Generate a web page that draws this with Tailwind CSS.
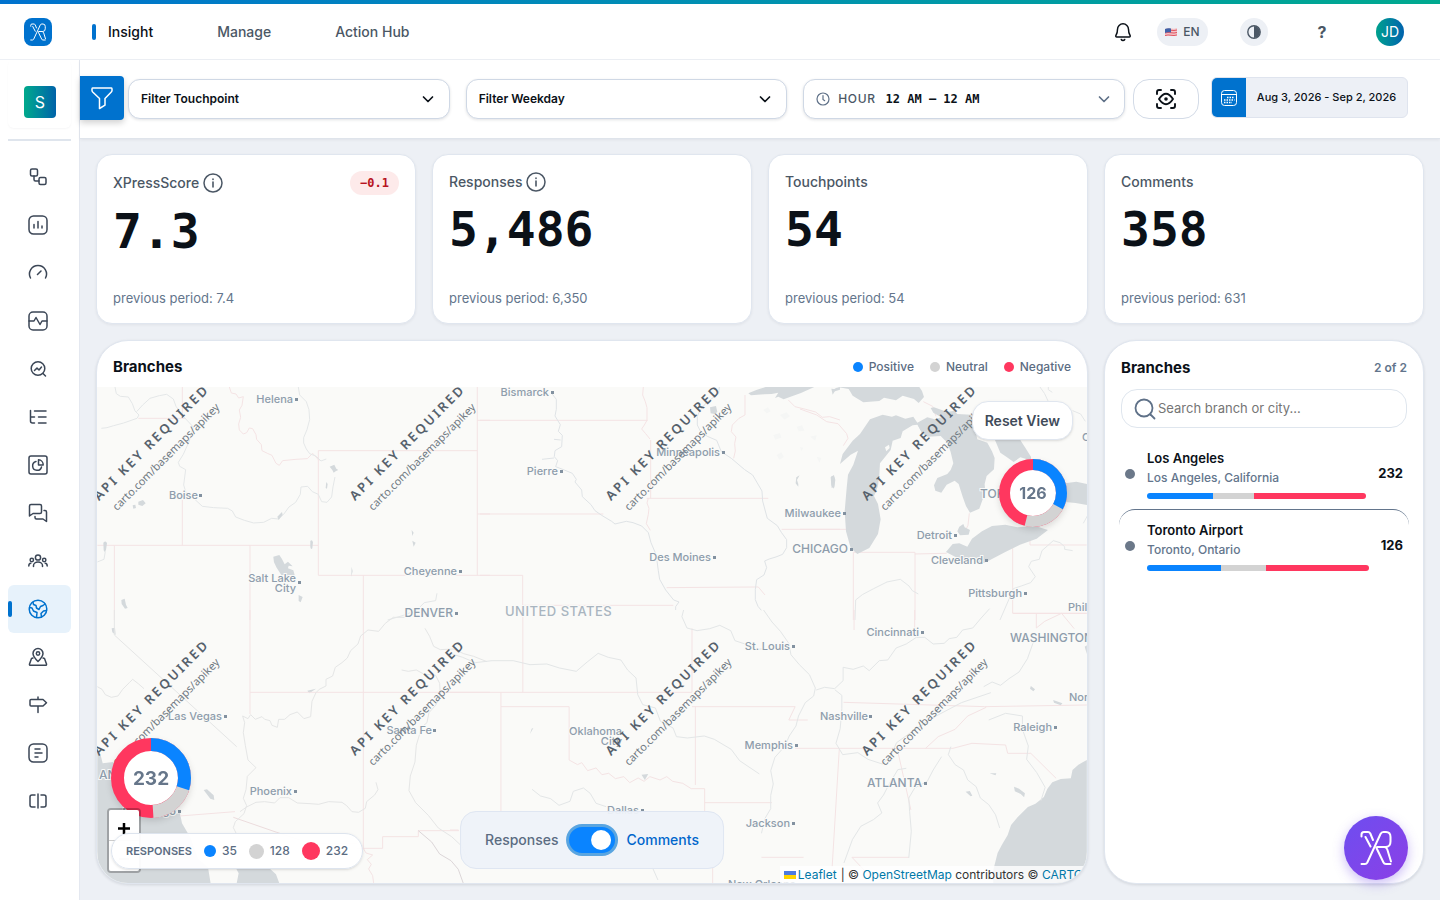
<!DOCTYPE html>
<html lang="en">
<head>
    <meta charset="UTF-8">
    <meta name="viewport" content="width=device-width, initial-scale=1.0">
    <title>Insight - Branches</title>
    <script src="https://cdn.jsdelivr.net/npm/@tailwindcss/browser@4"></script>
    <style>
        body { font-family: Inter, 'Liberation Sans', sans-serif; }
        .mono { font-family: 'DejaVu Sans Mono', 'Liberation Mono', monospace; }
        .map-line { fill: none; vector-effect: non-scaling-stroke; stroke-width: 1; stroke-linejoin: round; }
        .side-icon { width: 20px; height: 20px; fill: none; stroke: currentColor; stroke-width: 1.5; stroke-linecap: round; stroke-linejoin: round; }
    </style>
</head>
<body class="min-h-screen flex flex-col bg-[#edf0f5] text-[#0b1118]">
    <svg class="hidden" aria-hidden="true">
        <symbol id="logo" viewBox="0 0 32 36">
            <path d="M1.500 6.500V4.500Q1.500 2 4 2H8Q9.500 2 10.300 3.500L13 10M1.500 34H5Q6.500 34 7.300 32.500L20.500 4Q21.500 2 23.500 2H26Q30.500 2 30.500 7V11.500Q30.500 17 25.500 17H17.500Q16 17 16.700 18.500L23.500 32.500Q24.200 34 26 34H30.500M24.500 17Q26.500 17.300 27.300 19.500L31 31.500M5.500 7 10.500 16.500" fill="none" stroke="currentColor" stroke-width="2" stroke-linecap="round" stroke-linejoin="round"/>
        </symbol>
        <symbol id="info" viewBox="0 0 20 20">
            <circle cx="10" cy="10" r="9" fill="none" stroke="currentColor" stroke-width="1.5"/>
            <path d="M10 9v5M10 6v.5" fill="none" stroke="currentColor" stroke-width="1.600" stroke-linecap="round"/>
        </symbol>
        <symbol id="chevron" viewBox="0 0 12 12">
            <path d="M1.500 4 6 8.500 10.500 4" fill="none" stroke="currentColor" stroke-width="1.700" stroke-linecap="round" stroke-linejoin="round"/>
        </symbol>
    </svg>

    <!-- Top bar -->
    <div class="h-1 bg-linear-to-r from-[#0072ce] to-[#00a98f]"></div>
    <header class="h-14 flex items-center bg-white border-b border-[#edf0f5] pl-6 pr-9">
        <a href="#" aria-label="Home" class="size-7 rounded-lg bg-[#0072ce] text-white flex items-center justify-center">
            <svg class="w-4 h-[18px]"><use href="#logo"/></svg>
        </a>
        <nav class="flex items-center gap-16 ml-10 text-sm font-medium text-[#4b5765]">
            <a href="#" class="flex items-center gap-3 text-[#0b1118]"><span class="w-1 h-4 rounded-sm bg-[#0072ce]"></span>Insight</a>
            <a href="#">Manage</a>
            <a href="#">Action Hub</a>
        </nav>
        <div class="ml-auto flex items-center">
            <button aria-label="Notifications" class="mr-6">
                <svg class="size-5" viewBox="0 0 20 20" fill="none" stroke="currentColor" stroke-width="1.500" stroke-linejoin="round" stroke-linecap="round"><path d="M10 1.800a5.500 5.500 0 0 0-5.500 5.500c0 3-.6 4.700-1.500 6-.5.700-.2 1.700.8 1.700h12.400c1 0 1.300-1 .8-1.700-.9-1.300-1.500-3-1.500-6A5.500 5.500 0 0 0 10 1.800Z"/><path d="M8.300 17.500a2 2 0 0 0 3.400 0"/></svg>
            </button>
            <button class="h-7 w-[51px] rounded-full bg-[#edf0f5] flex items-center justify-center gap-1.5 text-xs font-medium text-[#4b5765] mr-8">
                <svg class="w-3 h-2" viewBox="0 0 12 8"><path d="M0 1c4-2 8 1 12-1v7c-4 2-8-1-12 1Z" fill="#f3c4c8"/><path d="M0 2.500c4-1.500 8 1 12-.5M0 5c4-1.500 8 1 12-.5M0 7.500c4-1.500 8 1 12-.5" stroke="#e0525f" fill="none"/><path d="M0 1c2-1 4-.8 6-.4v4C4 4.200 2 4 0 5Z" fill="#3f61a8"/></svg>
                EN
            </button>
            <button aria-label="Contrast" class="size-7 rounded-full bg-[#edf0f5] text-[#4b5765] flex items-center justify-center mr-10">
                <svg class="size-3.5" viewBox="0 0 14 14"><circle cx="7" cy="7" r="6.200" fill="none" stroke="currentColor" stroke-width="1.400"/><path d="M7 1a6 6 0 0 1 0 12Z" fill="currentColor"/></svg>
            </button>
            <button aria-label="Help" class="size-7 text-base font-bold text-[#4b5765] mr-10">?</button>
            <button class="size-7 rounded-full bg-linear-to-r from-[#00a08c] to-[#0062ad] text-white text-sm">JD</button>
        </div>
    </header>

    <div class="flex flex-1">
        <!-- Sidebar -->
        <aside class="w-20 shrink-0 bg-white border-r border-[#e4e8f0] px-2">
            <div class="h-[68px] pt-[26px] pl-4 rounded-md shadow-[0_1px_2px_rgba(15,23,42,0.04)]">
                <button class="size-8 rounded bg-linear-to-r from-[#00a98b] to-[#0062a8] text-white text-base">S</button>
            </div>
            <div class="h-0.5 bg-[#dfe5ed] mt-[11px] mb-3"></div>
            <nav class="flex flex-col text-[#3b4656]">
                <a href="#" aria-label="Journeys" class="h-12 pl-5 flex items-center"><svg class="side-icon" viewBox="0 0 20 20"><rect x="2.500" y="2" width="7" height="7" rx="1.500"/><rect x="11" y="10.500" width="7" height="7" rx="1.500"/><path d="M6 9v3.500Q6 14 7.500 14H11"/></svg></a>
                <a href="#" aria-label="Charts" class="h-12 pl-5 flex items-center"><svg class="side-icon" viewBox="0 0 20 20"><rect x="1" y="1" width="18" height="18" rx="4.500"/><path d="M6 9.500V13M10 6.500V13M14 11v2"/></svg></a>
                <a href="#" aria-label="Score" class="h-12 pl-5 flex items-center"><svg class="side-icon" viewBox="0 0 20 20"><path d="M2.500 15A8.500 8.500 0 1 1 17.500 15M9.500 11.500l3.500-3.500"/></svg></a>
                <a href="#" aria-label="Activity" class="h-12 pl-5 flex items-center"><svg class="side-icon" viewBox="0 0 20 20"><rect x="1" y="1" width="18" height="18" rx="4"/><path d="M1 10h5l2-3.500 4 7 2-3.500h5"/></svg></a>
                <a href="#" aria-label="Analysis" class="h-12 pl-5 flex items-center"><svg class="side-icon" viewBox="0 0 20 20"><circle cx="10" cy="9.500" r="6.800"/><path d="m15 14.500 2.500 2.500M6.500 11.500l2.500-2.500 2 2 2.500-3"/></svg></a>
                <a href="#" aria-label="Tree" class="h-12 pl-5 flex items-center"><svg class="side-icon" viewBox="0 0 20 20"><path d="M2.500 3.500V14q0 2 2 2h2M2.500 10h4M6.500 4H18M10.500 10H18M10.500 16H18"/></svg></a>
                <a href="#" aria-label="Segments" class="h-12 pl-5 flex items-center"><svg class="side-icon" viewBox="0 0 20 20"><rect x="1" y="1" width="18" height="18" rx="2"/><path d="M8 6.500A4.500 4.500 0 1 0 13.500 12M10.500 4.800V10h4.700A5 5 0 0 0 10.500 4.800Z"/></svg></a>
                <a href="#" aria-label="Comments" class="h-12 pl-5 flex items-center"><svg class="side-icon" viewBox="0 0 20 20"><path d="M3 1.500h9Q13.500 1.500 13.500 3v6q0 1.500-1.500 1.500H5L1.500 13V3Q1.500 1.500 3 1.500ZM16 7.500h1q1.500 0 1.500 1.500v9.500L15 16H8.500Q7 16 7 14.500V13.500"/></svg></a>
                <a href="#" aria-label="Teams" class="h-12 pl-5 flex items-center"><svg class="side-icon" viewBox="0 0 20 20"><circle cx="10" cy="6.500" r="2.600"/><circle cx="3.800" cy="9" r="1.700"/><circle cx="16.200" cy="9" r="1.700"/><path d="M5.500 15.500v-1a4.500 3.500 0 0 1 9 0v1M.8 15q0-2.500 2-2.700M19.200 15q0-2.500-2-2.700"/></svg></a>
                <a href="#" aria-label="Map" class="relative h-12 pl-5 flex items-center rounded-md bg-[#e7f2fb] text-[#0072ce]"><span class="absolute left-0 top-4 w-1 h-4 rounded-sm bg-[#0072ce]"></span><svg class="side-icon" viewBox="0 0 20 20"><circle cx="10" cy="10" r="8.800"/><path d="M5 3.200 5.500 5.500 8 6.500 8.500 9 11 10.500 12.500 7.500 15 6.500 17 5M1.500 8.500 4 9l1.500 3L9 13.500 8.500 18.500M13.500 18 13 14.500 15.500 12l3-.5"/></svg></a>
                <a href="#" aria-label="Locations" class="h-12 pl-5 flex items-center"><svg class="side-icon" viewBox="0 0 20 20"><path d="M10 14.500c-3-3-5-5-5-8a5 5 0 0 1 10 0c0 3-2 5-5 8Z"/><circle cx="10" cy="6.500" r="1.700"/><path d="M5 11 3.500 11.500 1.500 17q-.3 1.200 1 1.200h15q1.300 0 1-1.200l-2-5.500L15 11"/></svg></a>
                <a href="#" aria-label="Signposts" class="h-12 pl-5 flex items-center"><svg class="side-icon" viewBox="0 0 20 20"><path d="M10 2v2.500M10 11v6.500M3 4.500h12l3.500 3.200L15 11H3q-1 0-1-1V5.500q0-1 1-1Z"/></svg></a>
                <a href="#" aria-label="Reports" class="h-12 pl-5 flex items-center"><svg class="side-icon" viewBox="0 0 20 20"><rect x="1" y="1" width="18" height="18" rx="4.500"/><path d="M7 6h5M7 10h7M7 14h3"/></svg></a>
                <a href="#" aria-label="Compare" class="h-12 pl-5 flex items-center"><svg class="side-icon" viewBox="0 0 20 20"><path d="M10 3v14M7 4H4Q2 4 2 6v8q0 2 2 2h3M13 4h3q2 0 2 2v8q0 2-2 2h-3"/></svg></a>
            </nav>
        </aside>

        <div class="flex-1 min-w-0 flex flex-col">
            <!-- Filters -->
            <div class="h-[79px] flex items-start bg-white border-b border-[#dfe4eb] pt-4 pr-8 shadow-[0_1px_3px_rgba(15,23,42,0.06)]">
                <button aria-label="Toggle filters" class="w-11 h-11 rounded-r bg-[#0072ce] text-white flex items-center justify-center shadow-[0_3px_6px_rgba(0,0,0,0.18)]">
                    <svg class="size-6" viewBox="0 0 24 24" fill="none" stroke="currentColor" stroke-width="1.500" stroke-linejoin="round"><path d="M2.500 2h19q.5 0 .5 1v1.500q0 .8-.7 1.500L15 12.500v6.700L9.500 22.500v-10L2.700 6Q2 5.300 2 4.500V3q0-1 .5-1Z"/></svg>
                </button>
                <div class="flex-1 grid grid-cols-3 gap-4 pt-[3px] ml-1">
                    <div class="relative">
                        <select aria-label="Touchpoint" class="appearance-none w-full h-10 rounded-xl border border-[#cfd8e5] bg-white pl-3 pr-8 text-xs font-semibold shadow-[0_1px_3px_rgba(15,23,42,0.12)]"><option>Filter Touchpoint</option></select>
                        <svg class="absolute right-4 top-3.5 size-3 pointer-events-none"><use href="#chevron"/></svg>
                    </div>
                    <div class="relative">
                        <select aria-label="Weekday" class="appearance-none w-full h-10 rounded-xl border border-[#cfd8e5] bg-white pl-3 pr-8 text-xs font-semibold shadow-[0_1px_3px_rgba(15,23,42,0.12)]"><option>Filter Weekday</option></select>
                        <svg class="absolute right-4 top-3.5 size-3 pointer-events-none"><use href="#chevron"/></svg>
                    </div>
                    <button class="h-10 rounded-xl border border-[#cfd8e5] bg-white px-3 flex items-center text-xs shadow-[0_1px_3px_rgba(15,23,42,0.12)]">
                        <svg class="size-[14px] mr-2 text-[#5f7188]" viewBox="0 0 14 14" fill="none" stroke="currentColor" stroke-width="1.200" stroke-linecap="round"><circle cx="7" cy="7" r="6"/><path d="M7 3.500V7.500L8.700 8.700"/></svg>
                        <span class="text-[#4b5765] font-medium tracking-wider">HOUR</span>
                        <span class="mono font-bold ml-2.5">12 AM – 12 AM</span>
                        <svg class="size-3 ml-auto mr-0.5 text-[#5f7188]"><use href="#chevron"/></svg>
                    </button>
                </div>
                <button aria-label="Focus" class="ml-2 mt-[3px] w-[66px] h-10 rounded-2xl border border-[#d3dbe7] bg-white flex items-center justify-center">
                    <svg class="size-5" viewBox="0 0 20 20" fill="none" stroke="currentColor" stroke-width="1.900" stroke-linecap="round" stroke-linejoin="round"><path d="M1 5V3q0-2 2-2h2M15 1h2q2 0 2 2v2M19 15v2q0 2-2 2h-2M5 19H3q-2 0-2-2v-2"/><path d="M3 10q7-10.500 14 0-7 10.500-14 0Z"/><circle cx="10" cy="10" r="1.800" fill="currentColor" stroke="none"/></svg>
                </button>
                <button class="ml-3 mt-px h-[41px] w-[197px] rounded-md border border-[#dfe4ee] bg-[#edf0f6] flex items-center overflow-hidden text-[11px] font-medium">
                    <span class="h-full w-[34px] bg-[#0072ce] text-white flex items-center justify-center">
                        <svg class="size-[18px]" viewBox="0 0 18 18" fill="none" stroke="currentColor"><rect x="1.500" y="1.500" width="15" height="15" rx="3"/><path d="M2 5.500h14"/><path d="M7 8.500h7.500M4 11h10.500M4 13.500h8" stroke-width="1.500" stroke-dasharray="1.500 1"/></svg>
                    </span>
                    <span class="flex-1 text-center whitespace-nowrap">Aug 3, 2026 - Sep 2, 2026</span>
                </button>
            </div>

            <main class="flex-1 grid grid-cols-4 grid-rows-[170px_1fr] gap-4 px-4 pt-[15px] pb-4">
                <!-- Score cards -->
                <section class="rounded-2xl border border-[#e0e6ef] bg-white px-4 pt-4 pb-[15px] flex flex-col shadow-[0_1px_3px_rgba(15,23,42,0.06)]">
                    <div class="h-6 flex items-center gap-1 text-sm font-medium text-[#4b5765]">XPressScore <svg class="size-5"><use href="#info"/></svg><span class="mono ml-auto h-6 px-2.5 rounded-xl bg-[#fdeaea] text-[#b8141f] text-xs leading-6 font-bold">−0.1</span></div>
                    <p class="mono mt-3 text-5xl leading-12 font-bold">7.3</p>
                    <p class="mt-auto text-[13px] leading-5 text-[#63758c]">previous period: 7.4</p>
                </section>
                <section class="rounded-2xl border border-[#e0e6ef] bg-white px-4 pt-4 pb-[15px] flex flex-col shadow-[0_1px_3px_rgba(15,23,42,0.06)]">
                    <div class="h-[22px] flex items-center gap-1 text-sm font-medium text-[#4b5765]">Responses <svg class="size-5"><use href="#info"/></svg></div>
                    <p class="mono mt-3 text-5xl leading-12 font-bold">5,486</p>
                    <p class="mt-auto text-[13px] leading-5 text-[#63758c]">previous period: 6,350</p>
                </section>
                <section class="rounded-2xl border border-[#e0e6ef] bg-white px-4 pt-4 pb-[15px] flex flex-col shadow-[0_1px_3px_rgba(15,23,42,0.06)]">
                    <div class="h-[22px] flex items-center text-sm font-medium text-[#4b5765]">Touchpoints</div>
                    <p class="mono mt-3 text-5xl leading-12 font-bold">54</p>
                    <p class="mt-auto text-[13px] leading-5 text-[#63758c]">previous period: 54</p>
                </section>
                <section class="rounded-2xl border border-[#e0e6ef] bg-white px-4 pt-4 pb-[15px] flex flex-col shadow-[0_1px_3px_rgba(15,23,42,0.06)]">
                    <div class="h-[22px] flex items-center text-sm font-medium text-[#4b5765]">Comments</div>
                    <p class="mono mt-3 text-5xl leading-12 font-bold">358</p>
                    <p class="mt-auto text-[13px] leading-5 text-[#63758c]">previous period: 631</p>
                </section>

                <!-- Branch map -->
                <section class="col-span-3 rounded-[32px] border border-[#e0e6ef] bg-white flex flex-col overflow-hidden shadow-[0_1px_3px_rgba(15,23,42,0.12)]">
                    <div class="h-[46px] shrink-0 px-4 pt-1.5 flex items-center">
                        <h2 class="text-[15px] font-bold">Branches</h2>
                        <div class="ml-auto flex items-center gap-4 text-xs font-medium text-[#5b6c82]">
                            <span class="flex items-center gap-1.5"><i class="size-2.5 rounded-full bg-[#0a84ff]"></i>Positive</span>
                            <span class="flex items-center gap-1.5"><i class="size-2.5 rounded-full bg-[#d3d3d3]"></i>Neutral</span>
                            <span class="flex items-center gap-1.5"><i class="size-2.5 rounded-full bg-[#ff375f]"></i>Negative</span>
                        </div>
                    </div>
                    <div class="relative flex-1 overflow-hidden bg-[#fafaf8]">
                        <svg class="absolute inset-0 w-full h-full" viewBox="97 387 990 496" preserveAspectRatio="xMidYMid slice">
                            <!-- land and water, one group per map sheet -->
                            <g transform="translate(90 340) scale(.3333)">
                                <g stroke="#f4e3e4">
                                    <path class="map-line" d="M145 235H285M277 141V235M22 616H685M277 480V616M480 616V840M73 616V840M685 332H1162M685 332V706H1200M1162 141V706M1162 241H1200M1162 522H1200M820 706V840"/>
                                    <path class="map-line" d="m418 141 6 18 14 3 8 12 14-4-4 26-8 14 4 22-6 20 2 18 12 12 10-4 8-14 10 2 10 18 2 14 14 16 2 18 16 8 14 6 12 24 10 6 10-14 40-4 34-2 16-16 20 22"/>
                                </g>
                                <g stroke="#e4e7e8">
                                    <path class="map-line" d="m75 141 4 20 12 8 24 2 12 20 8 22 12 12-6 10-40 14-30 8-20 6-17 2M140 215l18-20 22-20 28-8 22-4 20 14 8 22 18 26 34 36-12 42-18 40-15 24 4 12 18 10-6 46 6 20 24 20 26 24 34 4 42 2 14 8 10 18 26 10 28 8 30-2 24-12 20 2 16-14 16-22 20-14 14-24 2-22 20-2 14 16 18 8 10 22 16 2 14-16 4-30 6-30M625 141l4 24 20 20 8 24 2 30-8 30-10 24 0 16 8 18 10 14 20 8 14 14 16-6"/>
                                    <path class="map-line" d="m1041 760-4 22-34 6-22 22-40 16-48 14M22 666l20-8 4-24"/>
                                </g>
                                <path fill="#d4d9dc" d="m550 650 18-5 8 12 8 16 10-8 14 14-12-2-2 8 16 6 4 14-16 6-10-6-14 0-14-22-8-16ZM145 485l14-5 8 10-10 8-12-4ZM128 496l8-2 2 10-8 2ZM40 608q8-8 11 2l-3 20q-5 10-7 0ZM661 603q5-6 8 4l-2 18q-4 5-6-4ZM94 780l10-4 4 18 5 10-8 2-10-14ZM719 380l14-6 6 12 6 4-8 4-6 4-4-8ZM709 426l4 6-2 14-4-2ZM562 530l14-14 2 8-12 16ZM626 765l12 6-6 16-6-4ZM785 680l3 14-4 16M965 570l6 8-4 10ZM967 602l10 6-6 12Z"/>
                            </g>
                            <g transform="translate(480 340) scale(.3333)">
                                <g stroke="#f4e3e4">
                                    <path class="map-line" d="M0 241H503M0 522H370M0 706H128V796H580M500 475H865M560 743 835 741 855 765M905 568H1080M512 300V475M490 141l-2 24 8 20 5 18 0 38-8 14-8 12 12 14 13 16M505 475l-4 14 6 16-2 18-6 28 12 20M795 165V225l-18 10-20 20-3 20 14 16-4 20 2 22-5 22M925 180l20 20 32 8 30 8 20 16 22-2 31 10"/>
                                </g>
                                <g stroke="#dfe3e6">
                                    <path class="map-line" d="m215 160 14 18 0 30-4 20 16 26-6 20 12 12-2 34-20 12-2 18 10 12-6 18 26 10 24 10 12 18-4 8 20 24 2 20 26 24 12 18 20 14 30 18 10 8 34-8 20 4 26 10 20 20 8 30 12 28 6 26 4 30 4 26 18 32 24 30 16 6-10 14 0 10M222 298l20 2M186 358l36-4"/>
                                    <path class="map-line" d="M718 141l-2 20-36 26-20 24-8 18 0 26 10 20 20 14 28 12 14 34 30 20 40 34 24 16 14 24 14 24 2 30 8 30 6 22 30 22 12 20 16 22 0 24-12 20-20 8-20 6-14 6 6 20-8 22-22 14-4 30 0 30 8 20 10 12"/>
                                </g>
                                <path fill="#d4d9dc" d="m805 160 24-10 28-9h146l-40 18-52 19-16-8-10 4 10-16-20 4-22 1-40 3ZM690 202l18-4 4 18-8 6-12-2ZM1053 410l8-4 4 14-2 20-8 4ZM1056 152l12-8 12-3v8l-20 6ZM949 412l10-6-8 14 4 12 0 8-8-10Z"/>
                                <path fill="#f5f6f5" d="m850 210 14-8 8 12-12 6ZM900 225l20-8 10 12-16 10ZM880 285l20-6 4 14-18 6ZM950 260l16-4 8 16-18 2ZM990 290l20-4-4 16ZM890 345l14-8 8 14-14 8ZM1010 350l14 4-6 14ZM960 320l10 4-6 10Z"/>
                            </g>
                            <g transform="translate(800 340) scale(.3333)">
                                <g stroke="#f4e3e4">
                                    <path class="map-line" d="M0 568H140M160 637H345V840M345 642 440 640M160 637V840M638 610V820H860M690 590V615H860M0 207l50 18 30 20 34 6 26 30 4 14-14 22M508 520l-4 36-10 20M370 185l28 14 10 30"/>
                                </g>
                                <g stroke="#e4e7e8">
                                    <path class="map-line" d="m165 840 2-60 20-16 34-18 40-20 40-8 26 20 10 14 18 10M600 840l26-60 14-34 24-8 28-10 14-18-20-30 8-16 24-6 8-26 34-30 20 6 14 12 0 8 24 4M720 141l14 20 12 26M818 212l24 10 14 22M850 550l12-22M745 141l0 8 12 8"/>
                                </g>
                                <path fill="#d4d9dc" d="m112 141h246l8 12 6 18-16 18-14-12-34-10-20 14-36-8-14 10-48 4-32-20-12-20ZM210 238l38-14 28 6 12-4 28 10 24-6 12 18 30-16 22 6 20-6-24-14-8-14 10-2 40 14 20-4 10 10 42 2 18 74 30 10 14 26 8 20-2 34-22 20-6 24 2 24-18 50-28 12-12-20-10-28-12-38-12-10-24 12-16 24-18-6-4-16 10-22 30-12 10-12 8-20-8-34-10-28-20-20-40 2-18-12-12-24-14 2-30 18-6 20-24 8-6 28-32 40-2 34-4 34-12 30 12 24 8 46-8 44-26 42-36 18-20-18-14-50-4-60 6-70 4-40 16-30 14-42-22 12-32 28 8-30 30-40 22-20ZM585 300h76l14 22 18 28v16l-16-10-16-4-20 14-20-14-20-14ZM795 430l34-5 32 7v63l-34-6-40-4ZM478 560l12-8 4 10 16 8-4 14-26 2-8-12ZM438 636l20-24 20-2 24 10 14-24 30-22 30-16 40-4 36 8 54-4 38 12-34 26-50 18-44 22-50 26-18 8-14-4-20-12-26 8ZM92 412l10-6 4 14-4 26-8-10ZM94 146l14 2-10 16Z"/>
                                <path fill="#fafaf8" d="m330 262 22-6 12 20-20 20-20-14ZM255 322l12-8 2 10-10 10Z"/>
                            </g>
                            <g transform="translate(90 610) scale(.3333)">
                                <path fill="#d4d9dc" d="m22 430 10 6 6 24 32-4 30 64 10 80 90 0 24 16 46-6 6 30 26 44 22 62 30 26 8 48H22ZM438 775h100l20 18 10 27H440l6-30ZM341 540l10-2 20 18 2 14-12-4ZM65 55l10-2 2 22-10-8ZM652 242l26-6-20 14Z"/>
                                <g stroke="#f4e3e4">
                                    <path class="map-line" d="M480 0V312M820 0V605M480 247H1200M270 618 435 605M820 605V715M800 715H878V680H985V662H1107M820 715l8 14 20 6-16 14 12 14-8 14 12 20 3 22"/>
                                    <path class="map-line" stroke="#ecdcdd" d="M430 622 560 667 660 700H800"/>
                                </g>
                                <g stroke="#e5e6e6">
                                    <path class="map-line" d="M73 0V75L440 410M22 230l14 8 10 16 18 8 20-4 14-20 20-20 10-10 18 14 16 14M950 22l-40 0-24 18-20 24-32-4-22 18-8 24-22 20-10 22-16 14-20 14-8 26-20 10 0 20-20 10-10 10-12 26-4 46-20 6-20-20-22 8-16 14-18 0-4 24-16-6-6-14-16-4-8-8-20 8-14-14-8 12-16-8 6 20-4 30 6 38 8 44 24 23-26 26-4 40-8 26 10 22-8 24-26 24-6 18 10 20M450 605l20-14 28-14 26-2 30 4 16-16 26 0 26 16 38 2 26 2 30-8 40 2 14 10 16 18 20 2 20-12 4-20 24-20 10-16-6-22M1005 55l14 24 12 30 20 10 40-2 30 14 30 8 40 16M935 180l20 4 24-4 22 12 36 4 12 24 2 36-14 30-20 22-6 30-16 14-16 54-4 50-14 42-4 44 20 36 38 38 30 38 40 26 32 30 13 34"/>
                                    <path class="map-line" stroke="#dcd6d8" d="m985 662 40 34 24 36 34 20 22 26 15 42"/>
                                </g>
                            </g>
                            <g transform="translate(450 610) scale(.4209 .3333)">
                                <path fill="#d4d9dc" d="m1513 450-20 14-14 16-4 25-24 2-20 10-12 20-8 24-20 20-18 10-24 30-16 24-8 30-14 30-10 24-12 60 2 34H1513Z"/>
                                <g stroke="#f4e3e4">
                                    <path class="map-line" d="M0 247H575V55M121 247V605M173 0V247M121 290H283V450l20 14 10-6 14 24 20-8 14 20 16-4 16 16 20-6 14 18 20-14 14 10 14-14 24 10 16-10 14 14 24 6 20 16H605V605M583 290V525M605 578H765M575 290H820L805 330H850M820 415H1195L1240 400 1320 405 1325 430H1380L1440 505M935 277 1270 290 1513 285M925 415 908 770M1065 430 1095 600M955 742H1090M740 742H840M955 742l30 40M1130 415l30-35 40-22 30-40 44-26M1104 0V80M960 0v60M1338 10H1513M1393 10v44l20-20 40-24 30 46M0 660H20M624 770v50"/>
                                </g>
                                <g stroke="#e3e6e7">
                                    <path class="map-line" d="m0 130 30 12 30 16 40-6 50 0 40 12 40-2 30 12 40 10 26-28 26-26 24 12 30 8 16 30 20 24 4 50 12 30 30 10 12 40 30 20 8 26 26 4 40-6 24 10 40 30 20 34 47 40M745 0l20 36 20 28 20 36 5 34 20 30 24 30 14 40-4 24-20 20-16 40-6 30-16 30-10 30-24 34-10 40 6 40-6 34 0 40-14 30-8 44M870 240l20-8 24 4 20-24 0-40 24 6 24-10 14 14 24-30 20-2 20-36 24-12 24-20 20 0 20 20 26-2 12-14 18-4 14-22 24-6 20-30 20-28M555 0l-4 20 12 34 24 8 30-6 24-10 26 16 10 30 24 10 20 16 86-4M915 240l16 16 0 40-4 60-10 44 16 34 36-6 24 20 34 14 20-24 14-40 40-36 54-44 60-40 70-30M1190 410l-6 24 16 30 20 16 10 30 20 20 10 34 20 20 16 30 10 40M195 538l20 20 24 8 20 20 26-12 8-30 24-10 16 16 14 30 24 10M1030 555l14-34 20-42 20-4M1168 440l-20 40-14 34-30 20-14 30 2 40 4 60-6 80M1030 555l-14 24 10 30-20 20-30 20-20 40-20 70M1280 330l40-20 40 8 0 40 14 50-4 40 24 40 20 44-10 40M1268 230l20-14 20 10 20-20 24-20 20-40 14-50 30-20M480 770l14 40"/>
                                </g>
                                <path fill="#d4d9dc" d="m1380 228 10 10-4 6-8-8ZM1340 530l12 6 14 14-2 12-8-10-14-8ZM1433 270l22 10-4 6-16-8ZM1508 110l5-4v26ZM1225 545l10-2 6 14-4 2ZM1282 490l16 0-2 6ZM455 494l16-2-8 18ZM198 354l-8 18 4-16Z"/>
                            </g>

                            <!-- place names -->
                            <g fill="#8e9dac" font-family="Inter, sans-serif" font-size="11" font-weight="500" text-anchor="end" stroke="#fafaf8" stroke-width="2" paint-order="stroke">
                                <text x="293" y="403">Helena</text><text x="198" y="499">Boise</text><text x="296" y="582">Salt Lake</text><text x="296" y="592">City</text>
                                <text x="457" y="575">Cheyenne</text><text x="453" y="617" font-size="12">DENVER</text><text x="549" y="396">Bismarck</text><text x="558" y="475">Pierre</text>
                                <text x="720" y="456">Minneapolis</text><text x="841" y="517">Milwaukee</text><text x="848" y="553" font-size="12">CHICAGO</text><text x="711" y="561">Des Moines</text>
                                <text x="952" y="539">Detroit</text><text x="983" y="564">Cleveland</text><text x="1022" y="597">Pittsburgh</text><text x="919" y="636">Cincinnati</text>
                                <text x="790" y="650">St. Louis</text><text x="868" y="720">Nashville</text><text x="1052" y="731">Raleigh</text><text x="793" y="749">Memphis</text>
                                <text x="922" y="787" font-size="12">ATLANTA</text><text x="790" y="827">Jackson</text><text x="639" y="814">Dallas</text><text x="622" y="735">Oklahoma</text><text x="622" y="745">City</text>
                                <text x="432" y="734">Santa Fe</text><text x="222" y="720">Las Vegas</text><text x="292" y="795">Phoenix</text><text x="176" y="815">San Diego</text>
                                <g text-anchor="start"><text x="1068" y="611">Philadelphia</text><text x="1010" y="642" font-size="12">WASHINGTON</text><text x="1069" y="701">Norfolk</text><text x="980" y="498" font-size="12">TORONTO</text><text x="99" y="779" font-size="12">ANGELES</text><text x="1082" y="441">Ottawa</text><text x="728" y="888">New Orleans</text><text x="505" y="616" font-size="13" fill="#a9b5c0" letter-spacing=".5">UNITED STATES</text></g>
                            </g>
                            <path fill="#8291a0" d="M295 398h3v3h-3zM199 494h3v3h-3zM298 581h3v3h-3zM459 570h3v3h-3zM455 612h3v3h-3zM551 391h3v3h-3zM560 470h3v3h-3zM722 451h3v3h-3zM843 512h3v3h-3zM850 548h3v3h-3zM713 556h3v3h-3zM954 534h3v3h-3zM985 559h3v3h-3zM1024 592h3v3h-3zM921 631h3v3h-3zM792 645h3v3h-3zM869 715h3v3h-3zM1054 726h3v3h-3zM795 744h3v3h-3zM924 782h3v3h-3zM792 822h3v3h-3zM641 809h3v3h-3zM433 729h3v3h-3zM224 715h3v3h-3zM294 790h3v3h-3zM178 810h3v3h-3z"/>

                            <!-- tile notice -->
                            <g font-family="'Noto Sans', sans-serif" fill="#56616c" text-anchor="middle">
                                <g id="notice" transform="translate(151 442) rotate(-45)"><text y="5" font-size="13" font-weight="600" letter-spacing="2.500">API KEY REQUIRED</text><text y="25" font-size="11" fill="#6f7982">carto.com/basemaps/apikey</text></g>
                                <use href="#notice" transform="translate(256 0)"/><use href="#notice" transform="translate(512 0)"/><use href="#notice" transform="translate(768 0)"/>
                                <use href="#notice" transform="translate(0 255)"/><use href="#notice" transform="translate(256 255)"/><use href="#notice" transform="translate(512 255)"/><use href="#notice" transform="translate(768 255)"/>
                            </g>

                            <!-- branch markers -->
                            <g fill="none" font-family="Inter, sans-serif" font-weight="700" text-anchor="middle">
                                <g transform="translate(151 778)" class="drop-shadow-md">
                                    <circle r="34" fill="#fff"/>
                                    <g stroke-width="13" transform="rotate(-90)"><circle r="33.500" stroke="#ff375f"/><circle r="33.500" stroke="#d3d3d3" pathLength="100" stroke-dasharray="49 100"/><circle r="33.500" stroke="#0a84ff" pathLength="100" stroke-dasharray="30 100"/></g>
                                    <text y="7" font-size="19" fill="#66768a">232</text>
                                </g>
                                <g transform="translate(1033 493)" class="drop-shadow-md">
                                    <circle r="28" fill="#fff"/>
                                    <g stroke-width="11" transform="rotate(-90)"><circle r="28.500" stroke="#ff375f"/><circle r="28.500" stroke="#d3d3d3" pathLength="100" stroke-dasharray="54 100"/><circle r="28.500" stroke="#0a84ff" pathLength="100" stroke-dasharray="33 100"/></g>
                                    <text y="6" font-size="16" fill="#66768a">126</text>
                                </g>
                            </g>
                        </svg>
                        <button class="absolute right-3.5 top-3.5 h-[39px] px-3 rounded-2xl border border-[#e0e6ef] bg-white text-sm font-semibold text-[#3f4b59] shadow-sm">Reset View</button>
                        <div class="absolute left-2.5 bottom-2.5 w-[34px] rounded border-2 border-black/25 bg-clip-padding overflow-hidden flex flex-col">
                            <button aria-label="Zoom in" class="h-[31px] pt-1.5 bg-white border-b border-[#ccc] flex items-center justify-center"><svg class="size-3" viewBox="0 0 12 12" stroke="#000" stroke-width="2.500"><path d="M6 1v11M0 6.500h12"/></svg></button>
                            <button aria-label="Zoom out" class="h-[30px] pt-1.5 bg-white flex items-center justify-center"><svg class="size-3" viewBox="0 0 12 12" stroke="#bbb" stroke-width="2"><path d="M1 6h10"/></svg></button>
                        </div>
                        <div class="absolute left-3.5 bottom-3.5 h-9 px-3.5 rounded-full border border-[#dde4ee] bg-white/95 flex items-center text-xs font-medium text-[#5b6c82] shadow-sm">
                            <span class="text-[11px] font-semibold mr-3">RESPONSES</span>
                            <i class="size-3 rounded-full bg-[#0a84ff] mr-1.5"></i>35
                            <i class="size-[15px] rounded-full bg-[#d3d3d3] ml-3 mr-1.5"></i>128
                            <i class="size-[18px] rounded-full bg-[#ff375f] ml-3 mr-1.5"></i>232
                        </div>
                        <div class="absolute left-1/2 -translate-x-1/2 bottom-3.5 h-[58px] px-6 rounded-2xl border border-[#dfe6f2] bg-[#eef2f9]/95 flex items-center gap-2 text-sm font-medium text-[#5b6c82]">
                            <span>Responses</span>
                            <label class="flex items-center gap-2 text-[#0066cc]">
                                <input type="checkbox" checked class="peer sr-only">
                                <span class="w-[52px] h-8 rounded-full border-3 border-[#5aa5e0] bg-[#0a84ff] flex items-center justify-end pr-1"><span class="size-5 rounded-full bg-white"></span></span>
                                Comments
                            </label>
                        </div>
                        <div class="absolute right-0 bottom-0 h-[17px] bg-white/80 px-1 flex items-center gap-1 text-xs whitespace-nowrap text-[#333]">
                            <a href="#" class="flex items-center gap-0.5 text-[#0078a8]"><svg class="w-3 h-2" viewBox="0 0 12 8"><path fill="#4c7be1" d="M0 0h12v4H0z"/><path fill="#ffd500" d="M0 4h12v4H0z"/></svg>Leaflet</a>
                            <span>| © <a href="#" class="text-[#0078a8]">OpenStreetMap</a> contributors © <a href="#" class="text-[#0078a8]">CARTO</a></span>
                        </div>
                    </div>
                </section>

                <!-- Branch list -->
                <section class="rounded-[32px] border border-[#e0e6ef] bg-white p-4 shadow-[0_1px_3px_rgba(15,23,42,0.12)]">
                    <div class="h-[22px] flex items-center justify-between">
                        <h2 class="text-[15px] font-bold">Branches</h2>
                        <span class="text-xs font-semibold text-[#63758c]">2 of 2</span>
                    </div>
                    <label class="mt-2.5 h-[39px] pl-3 pr-4 rounded-2xl border border-[#dfe6ee] flex items-center gap-0.5">
                        <svg class="size-[22px] shrink-0 text-[#5f7188]" viewBox="0 0 22 22" fill="none" stroke="currentColor" stroke-width="1.800" stroke-linecap="round"><circle cx="10" cy="10" r="8.500"/><path d="m16.500 16.500 4 4"/></svg>
                        <input type="text" aria-label="Search branch or city" placeholder="Search branch or city..." class="w-full min-w-0 text-[13px] outline-none placeholder:text-[#757575]">
                    </label>
                    <div class="mt-2.5 -mx-0.5">
                        <button class="w-full h-[71px] px-1.5 flex items-center text-left">
                            <span class="size-2.5 rounded-full bg-[#6b7889] mr-3 shrink-0"></span>
                            <span class="flex-1">
                                <span class="block text-[13px] leading-5 font-semibold">Los Angeles</span>
                                <span class="block text-xs leading-5 font-medium text-[#63758c]">Los Angeles, California</span>
                                <span class="mt-[5px] h-1.5 rounded-full overflow-hidden flex"><i class="bg-[#0a84ff]" style="width:30.3%"></i><i class="bg-[#d3d3d3]" style="width:18.5%"></i><i class="bg-[#ff375f] flex-1"></i></span>
                            </span>
                            <span class="ml-3 text-[13px] font-bold">232</span>
                        </button>
                        <button class="w-full h-[72px] px-1.5 rounded-2xl border-t border-[#63758c] flex items-center text-left">
                            <span class="size-2.5 rounded-full bg-[#6b7889] mr-3 shrink-0"></span>
                            <span class="flex-1">
                                <span class="block text-[13px] leading-5 font-semibold">Toronto Airport</span>
                                <span class="block text-xs leading-5 font-medium text-[#63758c]">Toronto, Ontario</span>
                                <span class="mt-[5px] h-1.5 rounded-full overflow-hidden flex"><i class="bg-[#0a84ff]" style="width:33.2%"></i><i class="bg-[#d3d3d3]" style="width:20.6%"></i><i class="bg-[#ff375f] flex-1"></i></span>
                            </span>
                            <span class="ml-3 text-[13px] font-bold">126</span>
                        </button>
                    </div>
                </section>
            </main>
        </div>
    </div>

    <button aria-label="Assistant" class="fixed right-8 bottom-5 size-16 rounded-full bg-linear-to-br from-[#6d4df0] to-[#8b3fe6] text-white flex items-center justify-center shadow-[0_4px_12px_rgba(109,70,230,0.35)]">
        <svg class="w-8 h-9"><use href="#logo"/></svg>
    </button>
</body>
</html>
